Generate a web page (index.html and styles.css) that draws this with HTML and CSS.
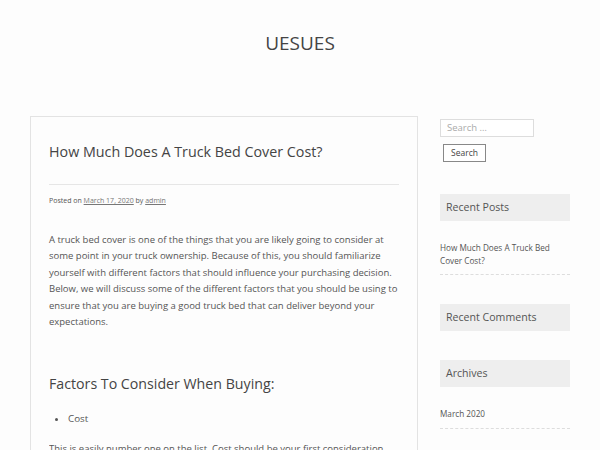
FILE: index.html
```html
<!DOCTYPE html>
<html>
<head>
<meta charset="utf-8">
<link rel="stylesheet" href="styles.css">
</head>
<body>
<header class="site-header">
  <div class="site-title">UESUES</div>
</header>
<div class="wrap">
  <main class="content">
    <h1 class="entry-title">How Much Does A Truck Bed Cover Cost?</h1>
    <div class="entry-meta">Posted on <a href="#">March 17, 2020</a> by <a href="#">admin</a></div>
    <p class="para">A truck bed cover is one of the things that you are likely going to consider at some point in your truck ownership. Because of this, you should familiarize yourself with different factors that should influence your purchasing decision. Below, we will discuss some of the different factors that you should be using to ensure that you are buying a good truck bed that can deliver beyond your expectations.</p>
    <h2 class="sub">Factors To Consider When Buying:</h2>
    <ul class="list"><li>Cost</li></ul>
    <p class="para last">This is easily number one on the list. Cost should be your first consideration.</p>
  </main>
  <aside class="sidebar">
    <div class="search">
      <div class="search-input">Search …</div>
      <div class="search-btn">Search</div>
    </div>
    <div class="widget">
      <div class="widget-title">Recent Posts</div>
      <div class="widget-item">How Much Does A Truck Bed Cover Cost?</div>
    </div>
    <div class="widget">
      <div class="widget-title">Recent Comments</div>
    </div>
    <div class="widget">
      <div class="widget-title">Archives</div>
      <div class="widget-item">March 2020</div>
    </div>
  </aside>
</div>
</body>
</html>
```
FILE: styles.css
```css
html, body { margin: 0; padding: 0; }
body {
  background: #fdfdfd;
  font-family: "Open Sans", "Noto Sans", sans-serif;
  color: #555;
  height: 450px;
  overflow: hidden;
}
.site-header {
  height: 116px;
  display: flex;
  justify-content: center;
  padding-top: 29px;
  box-sizing: border-box;
}
.site-title {
  font-size: 19px;
  color: #444;
  line-height: 28px;
  height: 28px;
}
.wrap {
  display: flex;
  margin-left: 30px;
  width: 540px;
  gap: 22px;
  align-items: flex-start;
}
.content {
  width: 388px;
  box-sizing: border-box;
  border: 1px solid #e3e3e3;
  padding: 24px 18px 20px 18px;
  height: 400px;
}
.entry-title {
  font-weight: normal;
  font-size: 14.3px;
  color: #444;
  margin: 0;
  line-height: 22px;
  padding-bottom: 21px;
  border-bottom: 1px solid #e6e6e6;
}
.entry-meta {
  font-size: 7px;
  margin-top: 11px;
  color: #555;
}
.entry-meta a { color: #777; }
.para {
  font-size: 9.5px;
  line-height: 16.4px;
  margin: 27px 0 0 0;
}
.para.last {
  white-space: nowrap;
  overflow: hidden;
}
.sub {
  font-weight: normal;
  font-size: 14.2px;
  color: #444;
  margin: 43px 0 0 0;
  line-height: 22px;
}
.list {
  margin: 16px 0 0 0;
  padding-left: 19px;
  font-size: 9.8px;
  line-height: 16px;
}
.list + .para { margin-top: 14px; }
.sidebar {
  width: 130px;
  padding-top: 3px;
}
.search-input {
  width: 94px;
  height: 18px;
  box-sizing: border-box;
  border: 1px solid #ddd;
  background: #fff;
  font-size: 9.5px;
  color: #aaa;
  padding-left: 6px;
  line-height: 16px;
}
.search-btn {
  margin-top: 7px;
  margin-left: 3px;
  width: 43px;
  height: 18px;
  box-sizing: border-box;
  border: 1px solid #888;
  background: #fff;
  font-size: 8.5px;
  color: #444;
  text-align: center;
  line-height: 15px;
}
.widget { margin-top: 32px; }
.widget + .widget { margin-top: 29px; }
.widget-title {
  background: #eee;
  height: 27px;
  font-size: 10.6px;
  color: #555;
  line-height: 27px;
  padding-left: 6px;
}
.widget-item {
  font-size: 8.2px;
  line-height: 12.5px;
  color: #555;
  margin-top: 21px;
  padding-bottom: 7px;
  border-bottom: 1px dashed #ddd;
  padding-right: 8px;
}
```
